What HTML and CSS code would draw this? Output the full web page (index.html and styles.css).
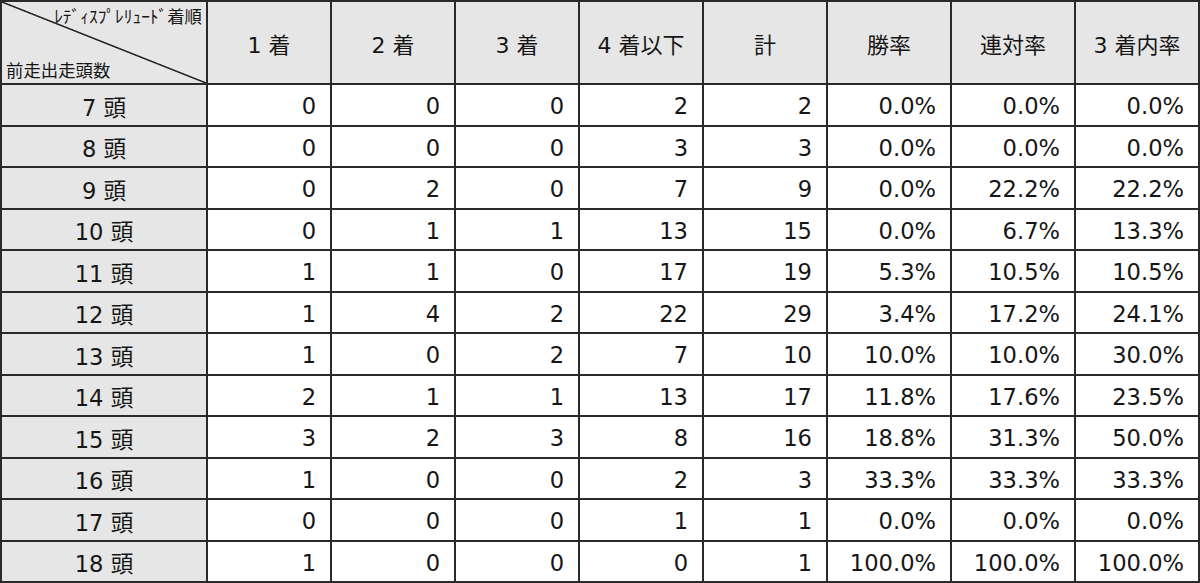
FILE: index.html
```html
<!DOCTYPE html>
<html lang="ja">
<head>
<meta charset="utf-8">
<title>レディスプレリュード着順</title>
<link rel="stylesheet" href="styles.css">
</head>
<body>
<table class="stats">
  <colgroup>
    <col class="c-first">
    <col class="c-num"><col class="c-num"><col class="c-num"><col class="c-num">
    <col class="c-num"><col class="c-num"><col class="c-num"><col class="c-num">
  </colgroup>
  <thead>
    <tr class="head-row">
      <th class="corner">
        <div class="corner-inner">
          <span class="corner-top">ﾚﾃﾞｨｽﾌﾟﾚﾘｭｰﾄﾞ着順</span>
          <span class="corner-bottom">前走出走頭数</span>
        </div>
      </th>
      <th>1 着</th>
      <th>2 着</th>
      <th>3 着</th>
      <th>4 着以下</th>
      <th>計</th>
      <th>勝率</th>
      <th>連対率</th>
      <th>3 着内率</th>
    </tr>
  </thead>
  <tbody>
    <tr><th class="label">7 頭</th><td>0</td><td>0</td><td>0</td><td>2</td><td>2</td><td>0.0%</td><td>0.0%</td><td>0.0%</td></tr>
    <tr><th class="label">8 頭</th><td>0</td><td>0</td><td>0</td><td>3</td><td>3</td><td>0.0%</td><td>0.0%</td><td>0.0%</td></tr>
    <tr><th class="label">9 頭</th><td>0</td><td>2</td><td>0</td><td>7</td><td>9</td><td>0.0%</td><td>22.2%</td><td>22.2%</td></tr>
    <tr><th class="label">10 頭</th><td>0</td><td>1</td><td>1</td><td>13</td><td>15</td><td>0.0%</td><td>6.7%</td><td>13.3%</td></tr>
    <tr><th class="label">11 頭</th><td>1</td><td>1</td><td>0</td><td>17</td><td>19</td><td>5.3%</td><td>10.5%</td><td>10.5%</td></tr>
    <tr><th class="label">12 頭</th><td>1</td><td>4</td><td>2</td><td>22</td><td>29</td><td>3.4%</td><td>17.2%</td><td>24.1%</td></tr>
    <tr><th class="label">13 頭</th><td>1</td><td>0</td><td>2</td><td>7</td><td>10</td><td>10.0%</td><td>10.0%</td><td>30.0%</td></tr>
    <tr><th class="label">14 頭</th><td>2</td><td>1</td><td>1</td><td>13</td><td>17</td><td>11.8%</td><td>17.6%</td><td>23.5%</td></tr>
    <tr><th class="label">15 頭</th><td>3</td><td>2</td><td>3</td><td>8</td><td>16</td><td>18.8%</td><td>31.3%</td><td>50.0%</td></tr>
    <tr><th class="label">16 頭</th><td>1</td><td>0</td><td>0</td><td>2</td><td>3</td><td>33.3%</td><td>33.3%</td><td>33.3%</td></tr>
    <tr><th class="label">17 頭</th><td>0</td><td>0</td><td>0</td><td>1</td><td>1</td><td>0.0%</td><td>0.0%</td><td>0.0%</td></tr>
    <tr><th class="label">18 頭</th><td>1</td><td>0</td><td>0</td><td>0</td><td>1</td><td>100.0%</td><td>100.0%</td><td>100.0%</td></tr>
  </tbody>
</table>
</body>
</html>
```

FILE: styles.css
```css
html, body {
  margin: 0;
  padding: 0;
  background: #ffffff;
}

body {
  font-family: "DejaVu Sans", "Noto Sans CJK JP", sans-serif;
  color: #161616;
}

.stats {
  width: 1200px;
  table-layout: fixed;
  border-collapse: separate;
  border-spacing: 0;
  border-left: 2px solid #2a2a2a;
  border-top: 2px solid #2a2a2a;
}

.c-first { width: 206px; }
.c-num { width: 124px; }

.stats th,
.stats td {
  border-right: 2px solid #2a2a2a;
  border-bottom: 2px solid #2a2a2a;
  padding: 0;
  font-size: 22px;
  font-weight: normal;
  box-sizing: border-box;
  white-space: nowrap;
}

.head-row th {
  height: 83px;
  background: #e6e6e6;
  text-align: center;
  vertical-align: middle;
}

.stats tbody tr {
  height: 41.5px;
}

.stats tbody th,
.stats tbody td {
  font-size: 22.6px;
  padding-top: 3px;
}

.stats tbody th.label {
  background: #e6e6e6;
  text-align: center;
}

.stats tbody td {
  background: #ffffff;
  text-align: right;
  padding-right: 14px;
}

.head-row th.corner {
  padding: 0;
  background-color: #e6e6e6;
  background-image: linear-gradient(to top right,
    rgba(0,0,0,0) calc(50% - 1.2px),
    #2a2a2a calc(50% - 0.4px),
    #2a2a2a calc(50% + 0.4px),
    rgba(0,0,0,0) calc(50% + 1.2px));
  vertical-align: top;
}

.corner-inner {
  height: 81px;
  display: flex;
  flex-direction: column;
  justify-content: space-between;
  font-family: "Noto Sans CJK JP", sans-serif;
  font-size: 17.4px;
  line-height: 1;
  padding: 5px 4px 5px 4px;
  box-sizing: border-box;
}

.corner-top {
  align-self: flex-end;
}

.corner-bottom {
  align-self: flex-start;
}
```
